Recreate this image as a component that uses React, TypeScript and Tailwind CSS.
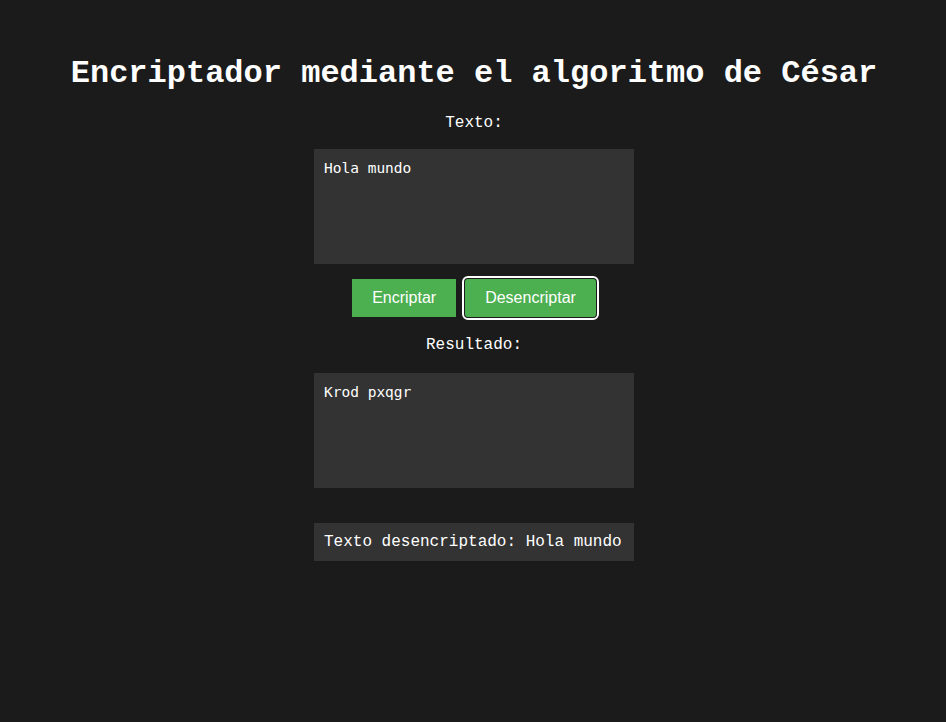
import { useState } from "react";

function caesar(text: string, shift: number) {
  return text.replace(/[a-z]/gi, (c) => {
    const base = c <= "Z" ? 65 : 97;
    return String.fromCharCode(((c.charCodeAt(0) - base + shift + 26) % 26) + base);
  });
}

export default function App() {
  const [texto, setTexto] = useState("Hola mundo");
  const [resultado, setResultado] = useState("Krod pxqgr");
  const [desc, setDesc] = useState("Hola mundo");

  return (
    <div className="min-h-[722px] bg-[#1b1b1b] text-white font-['Courier_New','Liberation_Mono',monospace] flex flex-col items-center pt-[56px] pl-[2px]">
      <h1 className="text-[32px] leading-[36px] font-bold">
        Encriptador mediante el algoritmo de César
      </h1>
      <label className="mt-[22px] text-[16px] leading-[18px]">Texto:</label>
      <textarea
        value={texto}
        onChange={(e) => setTexto(e.target.value)}
        className="mt-[17px] w-[320px] h-[115px] bg-[#333333] text-white px-[10px] py-[10px] resize-none outline-none font-['DejaVu_Sans_Mono',monospace] text-[14.5px] leading-[18px]"
      />
      <div className="mt-[15px] flex gap-[9px] font-['Liberation_Sans',Arial,sans-serif] text-[16px]">
        <button
          onClick={() => setResultado(caesar(texto, 3))}
          className="h-[38px] px-[20px] bg-[#4caf50] text-white"
        >
          Encriptar
        </button>
        <button
          onClick={() => setDesc(caesar(resultado, -3))}
          className="h-[38px] px-[20px] bg-[#4caf50] text-white rounded-[3px] outline-2 outline-white outline-offset-[1px] ring-1 ring-[#1b1b1b]"
        >
          Desencriptar
        </button>
      </div>
      <label className="mt-[19px] text-[16px] leading-[18px]">Resultado:</label>
      <textarea
        value={resultado}
        readOnly
        className="mt-[19px] w-[320px] h-[115px] bg-[#333333] text-white px-[10px] py-[10px] resize-none outline-none font-['DejaVu_Sans_Mono',monospace] text-[14.5px] leading-[18px]"
      />
      <div className="mt-[35px] w-[320px] h-[38px] bg-[#333333] px-[10px] flex items-center text-[16px] whitespace-nowrap">
        Texto desencriptado: {desc}
      </div>
    </div>
  );
}
